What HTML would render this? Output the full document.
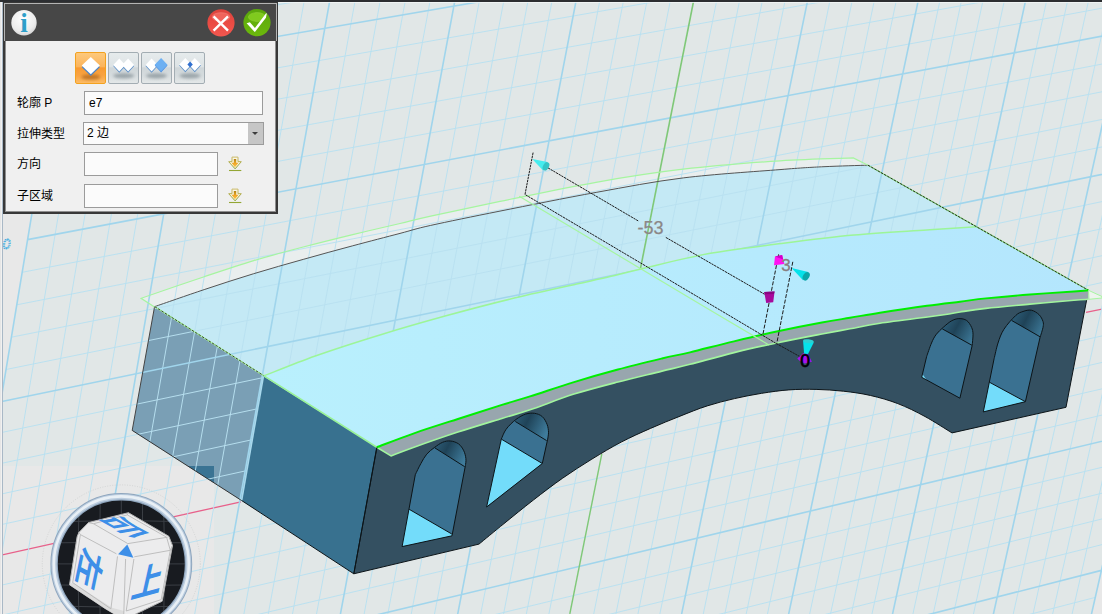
<!DOCTYPE html>
<html><head><meta charset="utf-8"><title>3D</title>
<style>
html,body{margin:0;padding:0;}
body{width:1102px;height:614px;overflow:hidden;position:relative;background:#e1e7e7;font-family:"Liberation Sans","Noto Sans CJK SC",sans-serif;font-size:12px;color:#000;}
#scene{position:absolute;left:0;top:0;display:block;}
#topbar{position:absolute;left:0;top:0;width:1102px;height:2px;background:#2c2e31;}
#topline{position:absolute;left:0;top:2px;width:1102px;height:1px;background:#f4f7f7;opacity:.8}
#leftbar{position:absolute;left:0;top:2px;width:3px;height:612px;background:linear-gradient(90deg,#e3e3e3 0,#e9e9e9 1px,#f2f2f2 1px,#f0f0f0 2px,#a9b8c6 2px,#a9b8c6 3px);}
#panel{position:absolute;left:3px;top:2px;width:275px;height:212px;background:#383838;}
#panel .in{position:absolute;left:1px;top:1px;width:273px;height:38px;background:#b4b4b4;}
#panel .hd{position:absolute;left:2px;top:2px;width:271px;height:37px;background:#474747;}
#panel .bf{position:absolute;left:2px;top:39px;width:271px;height:171px;background:#8e8e8e;}
#panel .bd{position:absolute;left:3px;top:39px;width:269px;height:170px;background:#f0f0f0;}
.lbl{position:absolute;left:17px;font-size:12px;line-height:14px;white-space:nowrap;}
.inp{position:absolute;box-sizing:border-box;border:1px solid #9b9b9b;background:#fbfbfb;font-size:12px;}
.btn{position:absolute;top:52px;width:31px;height:32px;box-sizing:border-box;border:1px solid #a3adb3;border-radius:2px;background:linear-gradient(#e6ebec,#dde3e5 45%,#cfd6d9 50%,#d6dcde 75%,#e3e7e8);}
.btn.on{border-color:#f3a21f;background:linear-gradient(#fdc97c,#fbb45c 45%,#f89a32 50%,#f9a443 75%,#fdbc66);}
.btn svg{position:absolute;left:0;top:0}
</style></head><body>
<svg id="scene" width="1102" height="614" viewBox="0 0 1102 614">
<defs>
<linearGradient id="topg" x1="0" y1="0" x2="1" y2="0"><stop offset="0" stop-color="#b9f0fd"/><stop offset="1" stop-color="#b4e6fd"/></linearGradient>
<linearGradient id="ceil1" x1="0" y1="0" x2="1" y2="0.5"><stop offset="0" stop-color="#3a7595"/><stop offset="0.55" stop-color="#1f4358"/><stop offset="1" stop-color="#3f7c9c"/></linearGradient>
<radialGradient id="ring" cx="0.5" cy="0.5" r="0.5"><stop offset="0.9" stop-color="#8fa6bf"/><stop offset="0.93" stop-color="#dfe9f2"/><stop offset="0.97" stop-color="#c5d4e3"/><stop offset="1" stop-color="#8fa3b8"/></radialGradient>
</defs>
<rect width="1102" height="614" fill="#e8e8e8"/>
<polygon points="-151.3,1317.7 1010.9,967.7 1329.3,-429.5 111.2,-264.2" fill="#e1e7e7"/>
<rect x="0" y="466" width="214" height="148" fill="#e8e8e8"/>
<text x="2.6" y="249" font-family="'Liberation Sans',sans-serif" font-style="italic" font-size="14" fill="none" stroke="#3cabe0" stroke-width="0.9" stroke-dasharray="1.6 0.8">0</text>
<path d="M141.1,298.3C151.6,294.7 185.4,283.0 204.2,276.7C223.0,270.4 237.2,265.6 253.7,260.6C270.2,255.7 286.7,251.3 303.2,247.0C319.7,242.7 336.6,238.5 352.7,234.6C368.8,230.7 387.0,226.6 400.0,223.5C413.0,220.4 414.0,219.9 430.7,216.2C447.4,212.5 472.4,207.1 500.0,201.4C527.5,195.8 565.5,187.7 596.0,182.3C626.5,176.9 652.3,172.8 683.0,169.2C713.7,165.6 751.6,162.7 780.0,160.8C808.4,158.9 841.1,158.4 853.3,157.9L868,165.2L868.0,165.2C860.7,165.4 838.7,166.0 824.0,166.7C809.3,167.4 803.5,167.7 780.0,169.6C756.5,171.5 713.9,174.1 683.3,177.9C652.6,181.7 626.6,186.9 596.1,192.4C565.6,197.9 527.6,205.6 500.0,211.1C472.4,216.6 447.4,221.7 430.7,225.4C414.0,229.1 413.0,230.0 400.0,233.4C387.0,236.8 368.8,241.5 352.7,245.8C336.6,250.1 319.7,254.7 303.2,259.4C286.7,264.0 270.2,268.7 253.7,273.7C237.2,278.7 220.7,284.1 204.2,289.6C187.7,295.1 162.9,303.8 154.7,306.6Z" fill="#e9eeee"/>
<path d="M154.7,306.6C162.9,303.8 187.7,295.1 204.2,289.6C220.7,284.1 237.2,278.7 253.7,273.7C270.2,268.7 286.7,264.0 303.2,259.4C319.7,254.7 336.6,250.1 352.7,245.8C368.8,241.5 387.0,236.8 400.0,233.4C413.0,230.0 414.0,229.1 430.7,225.4C447.4,221.7 472.4,216.6 500.0,211.1C527.6,205.6 565.6,197.9 596.1,192.4C626.6,186.9 652.6,181.7 683.3,177.9C713.9,174.1 756.5,171.5 780.0,169.6C803.5,167.7 809.3,167.4 824.0,166.7C838.7,166.0 860.7,165.4 868.0,165.2L976.5,226.8L976.5,226.8C968.2,227.3 947.1,228.6 926.7,230.0C906.3,231.4 878.3,232.8 854.1,235.1C829.9,237.3 805.7,240.4 781.5,243.5C757.3,246.6 732.5,249.3 708.9,253.6C685.3,257.9 656.4,265.4 639.9,269.2C623.4,273.0 620.5,274.1 610.0,276.6C599.5,279.1 593.2,280.4 576.7,284.1C560.2,287.8 533.1,293.5 511.3,298.8C489.5,304.1 467.8,309.8 446.0,315.8C424.2,321.8 402.5,328.0 380.7,334.7C358.9,341.4 334.7,349.1 315.3,356.0C295.9,362.9 272.7,372.5 264.2,375.8Z" fill="#c4e9f5"/>
<polygon points="154.5,307 264.5,376.8 242.6,501.2 132.2,430.4" fill="#7a9fb5"/>
<clipPath id="lfc"><polygon points="154.5,307 264.5,376.8 242.6,501.2 132.2,430.4"/></clipPath>
<rect x="187" y="466" width="27" height="17" fill="#3a7393" clip-path="url(#lfc)"/>
<path d="M0,555.3L241,501.8" stroke="#e8608a" stroke-width="1.3" fill="none"/>
<path d="M1086,312.4L1102,309.2" stroke="#e8608a" stroke-width="1.3" fill="none"/>
<path d="M-124.8,1309.7L139.2,-268.0M-98.5,1301.8L167.1,-271.8M-72.4,1293.9L194.8,-275.5M-46.3,1286.1L222.4,-279.3M5.3,1270.5L276.9,-286.7M30.9,1262.8L304.0,-290.4M56.3,1255.2L330.8,-294.0M81.6,1247.5L357.5,-297.6M131.8,1232.4L410.5,-304.8M156.7,1224.9L436.7,-308.4M181.5,1217.5L462.8,-311.9M206.1,1210.1L488.7,-315.4M254.9,1195.4L540.1,-322.4M279.2,1188.1L565.6,-325.8M303.3,1180.8L590.9,-329.3M327.2,1173.6L616.0,-332.7M374.8,1159.3L665.9,-339.5M398.3,1152.2L690.7,-342.8M421.8,1145.1L715.3,-346.2M445.1,1138.1L739.7,-349.5M491.4,1124.2L788.2,-356.0M514.4,1117.2L812.2,-359.3M537.2,1110.4L836.1,-362.5M559.9,1103.5L859.9,-365.8M605.0,1089.9L907.0,-372.2M627.4,1083.2L930.3,-375.3M649.6,1076.5L953.5,-378.5M671.7,1069.8L976.6,-381.6M715.7,1056.6L1022.4,-387.8M737.4,1050.1L1045.1,-390.9M759.1,1043.5L1067.7,-394.0M780.7,1037.0L1090.2,-397.0M823.5,1024.1L1134.7,-403.1M844.7,1017.7L1156.8,-406.1M865.9,1011.4L1178.8,-409.0M886.9,1005.0L1200.6,-412.0M928.6,992.5L1244.0,-417.9M949.4,986.2L1265.5,-420.8M970.0,980.0L1286.9,-423.7M990.5,973.9L1308.1,-426.6M-146.5,1288.6L1016.8,941.8M-141.7,1259.5L1022.7,915.7M-136.8,1230.2L1028.7,889.6M-131.9,1200.9L1034.6,863.5M-122.1,1141.9L1046.6,810.9M-117.2,1112.2L1052.6,784.5M-112.3,1082.5L1058.7,758.0M-107.3,1052.6L1064.7,731.4M-97.4,992.6L1076.9,678.0M-92.4,962.5L1083.0,651.2M-87.4,932.2L1089.1,624.4M-82.3,901.9L1095.3,597.4M-72.2,840.8L1107.6,543.2M-67.1,810.2L1113.8,516.0M-62.0,779.4L1120.0,488.8M-56.9,748.5L1126.3,461.4M-46.6,686.4L1138.8,406.4M-41.4,655.2L1145.1,378.8M-36.2,623.9L1151.4,351.1M-31.0,592.5L1157.7,323.3M-20.5,529.4L1170.4,267.5M-15.2,497.6L1176.8,239.5M-9.9,465.8L1183.2,211.4M-4.6,433.8L1189.7,183.2M6.0,369.5L1202.6,126.5M11.4,337.2L1209.1,98.1M16.8,304.8L1215.6,69.5M22.2,272.3L1222.1,40.9M33.0,206.9L1235.2,-16.6M38.5,174.0L1241.8,-45.5M43.9,141.0L1248.4,-74.5M49.4,107.9L1255.0,-103.6M60.5,41.3L1268.3,-162.0M66.0,7.9L1275.0,-191.4M71.6,-25.7L1281.7,-220.8M77.2,-59.4L1288.5,-250.3M88.5,-127.2L1302.0,-309.7M94.1,-161.3L1308.8,-339.5M99.8,-195.4L1315.6,-369.4M105.5,-229.8L1322.4,-399.4" stroke="#b8e0f0" stroke-width="0.95" fill="none"/>
<path d="M-151.3,1317.7L111.2,-264.2M-20.4,1278.3L249.7,-283.0M106.8,1240.0L384.1,-301.2M230.6,1202.7L514.5,-318.9M351.1,1166.4L641.1,-336.1M582.5,1096.7L883.5,-369.0M693.8,1063.2L999.6,-384.7M802.2,1030.6L1112.5,-400.1M907.8,998.7L1222.4,-415.0M1010.9,967.7L1329.3,-429.5M-151.3,1317.7L1010.9,967.7M-127.0,1171.4L1040.6,837.2M-102.4,1022.7L1070.8,704.8M-77.3,871.4L1101.4,570.4M-51.7,717.5L1132.5,433.9M0.7,401.7L1196.1,154.9M27.6,239.6L1228.6,12.2M55.0,74.7L1261.7,-132.8M82.8,-93.2L1295.2,-280.0M111.2,-264.2L1329.3,-429.5" stroke="#a0d5ec" stroke-width="1.6" fill="none"/>
<path d="M693.8,0L640.3,269.4" stroke="#7fc878" stroke-width="1.6" fill="none"/>
<path d="M601.8,453.8L569.8,614" stroke="#7fc878" stroke-width="1.4" fill="none"/>
<path d="M154.7,306.6C162.9,303.8 187.7,295.1 204.2,289.6C220.7,284.1 237.2,278.7 253.7,273.7C270.2,268.7 286.7,264.0 303.2,259.4C319.7,254.7 336.6,250.1 352.7,245.8C368.8,241.5 387.0,236.8 400.0,233.4C413.0,230.0 414.0,229.1 430.7,225.4C447.4,221.7 472.4,216.6 500.0,211.1C527.6,205.6 565.6,197.9 596.1,192.4C626.6,186.9 652.6,181.7 683.3,177.9C713.9,174.1 756.5,171.5 780.0,169.6C803.5,167.7 809.3,167.4 824.0,166.7C838.7,166.0 860.7,165.4 868.0,165.2" stroke="#555" stroke-width="1" fill="none"/>
<path d="M154.5,307L141.1,298.3C151.6,294.7 185.4,283.0 204.2,276.7C223.0,270.4 237.2,265.6 253.7,260.6C270.2,255.7 286.7,251.3 303.2,247.0C319.7,242.7 336.6,238.5 352.7,234.6C368.8,230.7 387.0,226.6 400.0,223.5C413.0,220.4 414.0,219.9 430.7,216.2C447.4,212.5 472.4,207.1 500.0,201.4C527.5,195.8 565.5,187.7 596.0,182.3C626.5,176.9 652.3,172.8 683.0,169.2C713.7,165.6 751.6,162.7 780.0,160.8C808.4,158.9 841.1,158.4 853.3,157.9L868,165.2" stroke="#a6f5a0" stroke-width="1.2" fill="none"/>
<path d="M132.2,430.4L154.5,307" stroke="#444" stroke-width="1" fill="none"/>
<path d="M132.2,430.4L242,500.8" stroke="#333" stroke-width="1" fill="none"/>
<polygon points="263.4,376.3 378,448 353.8,573.8 241.6,500.5" fill="#38718f"/>
<path d="M263.4,376.3L241.6,500.5" stroke="#a8d8ec" stroke-width="1.6" fill="none"/>
<path d="M376.8,447.2C383.0,444.9 400.5,438.0 414.0,433.3C427.5,428.6 443.2,423.7 457.9,419.0C472.5,414.3 489.9,408.7 501.9,404.9C513.9,401.1 518.0,400.2 530.0,396.4C542.0,392.6 559.4,386.6 574.0,382.1C588.6,377.6 603.2,373.4 617.9,369.5C632.5,365.6 649.9,361.4 661.9,358.5C673.9,355.6 678.0,355.2 690.0,352.3C702.0,349.4 719.4,344.8 734.0,341.3C748.6,337.8 763.2,334.3 777.9,331.2C792.5,328.1 809.9,324.7 821.9,322.5C833.9,320.3 840.3,319.4 850.0,317.8C859.7,316.2 867.2,314.7 880.0,312.7C892.8,310.7 913.7,307.6 927.0,305.8C940.3,304.0 950.2,302.9 960.0,301.7C969.8,300.5 974.4,299.6 986.0,298.4C997.6,297.2 1015.3,295.6 1029.9,294.5C1044.6,293.4 1064.1,292.2 1073.9,291.5C1083.7,290.8 1086.1,290.5 1088.5,290.3L1066,407.3L952,432.9L952.0,432.9C947.5,430.2 934.0,421.4 925.0,416.5C916.0,411.6 906.9,407.1 897.8,403.6C888.7,400.1 879.7,397.6 870.6,395.5C861.5,393.4 852.5,392.2 843.4,391.2C834.3,390.2 825.2,389.6 816.1,389.4C807.0,389.2 798.0,389.2 788.9,389.9C779.8,390.5 770.8,391.9 761.7,393.3C752.6,394.8 743.6,396.5 734.5,398.6C725.4,400.7 716.3,403.0 707.2,405.9C698.1,408.8 689.5,412.4 680.0,416.2C670.5,419.9 660.3,424.1 650.5,428.4C640.7,432.7 631.0,437.0 621.2,442.1C611.4,447.2 601.7,453.1 591.9,459.1C582.1,465.1 572.4,471.4 562.6,478.2C552.8,485.0 543.1,492.5 533.3,500.1C523.5,507.7 513.0,516.3 504.0,523.6C494.9,530.9 483.2,540.7 479.0,544.1L353.8,573.8Z" fill="#345061" stroke="#0c1418" stroke-width="1"/>
<path d="M264.2,375.8C272.7,372.5 295.9,362.9 315.3,356.0C334.7,349.1 358.9,341.4 380.7,334.7C402.5,328.0 424.2,321.8 446.0,315.8C467.8,309.8 489.5,304.1 511.3,298.8C533.1,293.5 560.2,287.8 576.7,284.1C593.2,280.4 599.5,279.1 610.0,276.6C620.5,274.1 623.4,273.0 639.9,269.2C656.4,265.4 685.3,257.9 708.9,253.6C732.5,249.3 757.3,246.6 781.5,243.5C805.7,240.4 829.9,237.3 854.1,235.1C878.3,232.8 906.3,231.4 926.7,230.0C947.1,228.6 968.2,227.3 976.5,226.8L1088.5,290.3L1088.5,290.3C1086.1,290.5 1083.7,290.8 1073.9,291.5C1064.1,292.2 1044.6,293.4 1029.9,294.5C1015.3,295.6 997.6,297.2 986.0,298.4C974.4,299.6 969.8,300.5 960.0,301.7C950.2,302.9 940.3,304.0 927.0,305.8C913.7,307.6 892.8,310.7 880.0,312.7C867.2,314.7 859.7,316.2 850.0,317.8C840.3,319.4 833.9,320.3 821.9,322.5C809.9,324.7 792.5,328.1 777.9,331.2C763.2,334.3 748.6,337.8 734.0,341.3C719.4,344.8 702.0,349.4 690.0,352.3C678.0,355.2 673.9,355.6 661.9,358.5C649.9,361.4 632.5,365.6 617.9,369.5C603.2,373.4 588.6,377.6 574.0,382.1C559.4,386.6 542.0,392.6 530.0,396.4C518.0,400.2 513.9,401.1 501.9,404.9C489.9,408.7 472.5,414.3 457.9,419.0C443.2,423.7 427.5,428.6 414.0,433.3C400.5,438.0 383.0,444.9 376.8,447.2Z" fill="url(#topg)"/>
<path d="M264.2,375.8C272.7,372.5 295.9,362.9 315.3,356.0C334.7,349.1 358.9,341.4 380.7,334.7C402.5,328.0 424.2,321.8 446.0,315.8C467.8,309.8 489.5,304.1 511.3,298.8C533.1,293.5 560.2,287.8 576.7,284.1C593.2,280.4 599.5,279.1 610.0,276.6C620.5,274.1 623.4,273.0 639.9,269.2C656.4,265.4 685.3,257.9 708.9,253.6C732.5,249.3 757.3,246.6 781.5,243.5C805.7,240.4 829.9,237.3 854.1,235.1C878.3,232.8 906.3,231.4 926.7,230.0C947.1,228.6 968.2,227.3 976.5,226.8" stroke="#9cf598" stroke-width="1.5" fill="none"/>
<path d="M154.7,306.6L263.6,375.6" stroke="#a6f5a0" stroke-width="1.3" fill="none"/>
<path d="M154.7,306.6L263.6,375.6" stroke="#3c4a30" stroke-width="1" fill="none" stroke-dasharray="2.5 1.5"/>
<path d="M263.6,375.6L376.8,447.2" stroke="#98f296" stroke-width="1.6" fill="none"/>
<path d="M868,165.2L1088.5,290.3" stroke="#8fe08a" stroke-width="1.3" fill="none"/>
<path d="M868,165.2L1088.5,290.3" stroke="#24331a" stroke-width="1" fill="none" stroke-dasharray="2.5 1.2"/>
<path d="M376.8,447.2C383.0,444.9 400.5,438.0 414.0,433.3C427.5,428.6 443.2,423.7 457.9,419.0C472.5,414.3 489.9,408.7 501.9,404.9C513.9,401.1 518.0,400.2 530.0,396.4C542.0,392.6 559.4,386.6 574.0,382.1C588.6,377.6 603.2,373.4 617.9,369.5C632.5,365.6 649.9,361.4 661.9,358.5C673.9,355.6 678.0,355.2 690.0,352.3C702.0,349.4 719.4,344.8 734.0,341.3C748.6,337.8 763.2,334.3 777.9,331.2C792.5,328.1 809.9,324.7 821.9,322.5C833.9,320.3 840.3,319.4 850.0,317.8C859.7,316.2 867.2,314.7 880.0,312.7C892.8,310.7 913.7,307.6 927.0,305.8C940.3,304.0 950.2,302.9 960.0,301.7C969.8,300.5 974.4,299.6 986.0,298.4C997.6,297.2 1015.3,295.6 1029.9,294.5C1044.6,293.4 1064.1,292.2 1073.9,291.5C1083.7,290.8 1086.1,290.5 1088.5,290.3L1088.5,299.3L1088.5,299.3C1086.1,299.5 1083.7,299.5 1073.9,300.3C1064.1,301.1 1044.6,302.8 1029.9,304.1C1015.3,305.5 997.6,307.1 986.0,308.4C974.4,309.7 967.3,310.9 960.0,312.0C952.7,313.1 955.3,313.1 942.0,315.0C928.7,316.9 895.3,321.0 880.0,323.3C864.7,325.6 859.7,327.0 850.0,328.8C840.3,330.6 833.9,331.7 821.9,334.0C809.9,336.3 792.5,339.6 777.9,342.7C763.2,345.8 748.6,349.0 734.0,352.6C719.4,356.2 702.0,361.2 690.0,364.3C678.0,367.4 673.9,368.2 661.9,371.1C649.9,374.1 632.5,378.2 617.9,382.0C603.2,385.8 588.6,389.5 574.0,394.1C559.4,398.7 542.0,405.8 530.0,409.8C518.0,413.9 513.9,414.7 501.9,418.4C489.9,422.1 472.5,427.3 457.9,432.1C443.2,436.9 425.1,443.3 414.0,447.3C402.9,451.3 394.8,454.5 391.0,455.9Z" fill="#98a6ae"/>
<path d="M376.8,447.2L391.0,455.9C394.8,454.5 402.9,451.3 414.0,447.3C425.1,443.3 443.2,436.9 457.9,432.1C472.5,427.3 489.9,422.1 501.9,418.4C513.9,414.7 518.0,413.9 530.0,409.8C542.0,405.8 559.4,398.7 574.0,394.1C588.6,389.5 603.2,385.8 617.9,382.0C632.5,378.2 649.9,374.1 661.9,371.1C673.9,368.2 678.0,367.4 690.0,364.3C702.0,361.2 719.4,356.2 734.0,352.6C748.6,349.0 763.2,345.8 777.9,342.7C792.5,339.6 809.9,336.3 821.9,334.0C833.9,331.7 840.3,330.6 850.0,328.8C859.7,327.0 864.7,325.6 880.0,323.3C895.3,321.0 928.7,316.9 942.0,315.0C955.3,313.1 952.7,313.1 960.0,312.0C967.3,310.9 974.4,309.7 986.0,308.4C997.6,307.1 1015.3,305.5 1029.9,304.1C1044.6,302.8 1064.1,301.1 1073.9,300.3C1083.7,299.5 1086.1,299.5 1088.5,299.3" stroke="#a2f59e" stroke-width="1.6" fill="none" stroke-linejoin="round"/>
<path d="M376.8,447.2C383.0,444.9 400.5,438.0 414.0,433.3C427.5,428.6 443.2,423.7 457.9,419.0C472.5,414.3 489.9,408.7 501.9,404.9C513.9,401.1 518.0,400.2 530.0,396.4C542.0,392.6 559.4,386.6 574.0,382.1C588.6,377.6 603.2,373.4 617.9,369.5C632.5,365.6 649.9,361.4 661.9,358.5C673.9,355.6 678.0,355.2 690.0,352.3C702.0,349.4 719.4,344.8 734.0,341.3C748.6,337.8 763.2,334.3 777.9,331.2C792.5,328.1 809.9,324.7 821.9,322.5C833.9,320.3 840.3,319.4 850.0,317.8C859.7,316.2 867.2,314.7 880.0,312.7C892.8,310.7 913.7,307.6 927.0,305.8C940.3,304.0 950.2,302.9 960.0,301.7C969.8,300.5 974.4,299.6 986.0,298.4C997.6,297.2 1015.3,295.6 1029.9,294.5C1044.6,293.4 1064.1,292.2 1073.9,291.5C1083.7,290.8 1086.1,290.5 1088.5,290.3" stroke="#00ee00" stroke-width="1.9" fill="none"/>
<path d="M1088.5,290.3L1102,296.5L1102,298L1089,299.3Z" fill="#eef4ee" stroke="#a6f5a0" stroke-width="1"/>
<clipPath id="wc0"><path d="M402.1,546.6L415.3,474.7C416.2,472.8 419.1,466.7 421.0,463.3C422.9,459.9 424.4,456.9 426.7,454.2C429.0,451.5 432.0,449.3 434.7,447.3C437.4,445.3 440.0,443.4 442.6,442.3C445.2,441.2 447.9,440.7 450.6,441.0C453.3,441.3 456.4,442.3 458.6,443.9C460.8,445.5 462.6,448.3 463.8,450.8C465.0,453.3 465.6,456.2 465.9,458.7C466.2,461.2 465.5,464.5 465.4,465.6L452.0,535.8Z"/></clipPath>
<path d="M402.1,546.6L415.3,474.7C416.2,472.8 419.1,466.7 421.0,463.3C422.9,459.9 424.4,456.9 426.7,454.2C429.0,451.5 432.0,449.3 434.7,447.3C437.4,445.3 440.0,443.4 442.6,442.3C445.2,441.2 447.9,440.7 450.6,441.0C453.3,441.3 456.4,442.3 458.6,443.9C460.8,445.5 462.6,448.3 463.8,450.8C465.0,453.3 465.6,456.2 465.9,458.7C466.2,461.2 465.5,464.5 465.4,465.6L452.0,535.8Z" fill="#3a7191"/>
<clipPath id="wc1"><path d="M486.6,507.0L501.3,439.1C502.1,437.5 503.7,432.6 506.1,429.3C508.5,426.0 512.6,422.0 515.9,419.5C519.2,417.0 522.6,415.1 525.7,414.1C528.8,413.1 531.7,412.9 534.5,413.3C537.3,413.7 540.2,414.8 542.3,416.6C544.4,418.5 546.1,421.8 547.1,424.4C548.1,427.0 548.4,429.8 548.5,432.2C548.6,434.6 547.8,438.0 547.7,439.1L542.3,463.5Z"/></clipPath>
<path d="M486.6,507.0L501.3,439.1C502.1,437.5 503.7,432.6 506.1,429.3C508.5,426.0 512.6,422.0 515.9,419.5C519.2,417.0 522.6,415.1 525.7,414.1C528.8,413.1 531.7,412.9 534.5,413.3C537.3,413.7 540.2,414.8 542.3,416.6C544.4,418.5 546.1,421.8 547.1,424.4C548.1,427.0 548.4,429.8 548.5,432.2C548.6,434.6 547.8,438.0 547.7,439.1L542.3,463.5Z" fill="#3a7191"/>
<clipPath id="wc2"><path d="M921.7,377.3L926.6,356.7C927.4,354.4 929.9,346.8 931.5,343.0C933.1,339.2 934.4,336.8 936.4,334.2C938.4,331.6 940.8,329.6 943.2,327.4C945.7,325.2 948.5,322.6 951.1,321.1C953.7,319.6 956.3,318.7 958.9,318.6C961.5,318.5 964.6,319.0 966.7,320.5C968.8,322.0 970.6,325.1 971.6,327.4C972.6,329.7 972.9,331.2 973.0,334.2C973.1,337.2 972.3,343.5 972.2,345.4L959.9,398.2Z"/></clipPath>
<path d="M921.7,377.3L926.6,356.7C927.4,354.4 929.9,346.8 931.5,343.0C933.1,339.2 934.4,336.8 936.4,334.2C938.4,331.6 940.8,329.6 943.2,327.4C945.7,325.2 948.5,322.6 951.1,321.1C953.7,319.6 956.3,318.7 958.9,318.6C961.5,318.5 964.6,319.0 966.7,320.5C968.8,322.0 970.6,325.1 971.6,327.4C972.6,329.7 972.9,331.2 973.0,334.2C973.1,337.2 972.3,343.5 972.2,345.4L959.9,398.2Z" fill="#3a7191"/>
<clipPath id="wc3"><path d="M983.3,411.9L994.1,358.7C994.8,356.1 996.4,347.9 998.0,343.0C999.6,338.1 1001.0,333.9 1003.9,329.3C1006.8,324.7 1012.4,318.6 1015.6,315.6C1018.8,312.6 1020.4,312.4 1023.0,311.5C1025.6,310.6 1028.6,309.7 1031.3,310.2C1034.0,310.7 1037.1,312.8 1039.1,314.7C1041.0,316.6 1042.3,319.4 1043.0,321.5C1043.7,323.6 1043.5,324.8 1043.0,327.4C1042.5,330.0 1040.6,335.6 1040.1,337.2L1025.4,401.7Z"/></clipPath>
<path d="M983.3,411.9L994.1,358.7C994.8,356.1 996.4,347.9 998.0,343.0C999.6,338.1 1001.0,333.9 1003.9,329.3C1006.8,324.7 1012.4,318.6 1015.6,315.6C1018.8,312.6 1020.4,312.4 1023.0,311.5C1025.6,310.6 1028.6,309.7 1031.3,310.2C1034.0,310.7 1037.1,312.8 1039.1,314.7C1041.0,316.6 1042.3,319.4 1043.0,321.5C1043.7,323.6 1043.5,324.8 1043.0,327.4C1042.5,330.0 1040.6,335.6 1040.1,337.2L1025.4,401.7Z" fill="#3a7191"/>

<g clip-path="url(#wc0)"><polygon points="428,430 470,430 470,469.7 434.7,447.8" fill="url(#ceil1)"/><path d="M434.7,447.8L464.7,466.7" stroke="#0c1418" stroke-width="1"/><polygon points="409.2,509.3 450.6,533.2 453,536 402,547.2 395,547" fill="#73dcfa"/><path d="M409.2,509.3L451.8,534" stroke="#0c1418" stroke-width="1"/></g>
<g clip-path="url(#wc1)"><polygon points="508,400 552,400 552,443.5 515.3,421.5" fill="url(#ceil1)"/><path d="M515.3,421.5L546.6,440.6" stroke="#0c1418" stroke-width="1"/><polygon points="494,435 501.3,439.1 542.3,463.5 486.6,507 480,507" fill="#73dcfa"/><path d="M501.3,439.1L542.3,463.5" stroke="#0c1418" stroke-width="1"/></g>
<g clip-path="url(#wc2)"><polygon points="936,310 980,310 980,349.5 972.2,345.4 942.3,328.9" fill="url(#ceil1)"/><path d="M942.3,328.9L972.2,345.4" stroke="#0c1418" stroke-width="1"/><polygon points="915,376 921.7,377.3 927,380.5 921,372" fill="#73dcfa"/></g>
<g clip-path="url(#wc3)"><polygon points="1006,300 1050,300 1050,342 1040.1,336.8 1011.7,320.5" fill="url(#ceil1)"/><path d="M1011.7,320.5L1040.1,336.8" stroke="#0c1418" stroke-width="1"/><polygon points="989.2,382.1 1025.4,401.7 983.3,411.9 978,411" fill="#73dcfa"/><path d="M989.2,382.1L1025.4,401.7" stroke="#0c1418" stroke-width="1"/></g>

<path d="M402.1,546.6L415.3,474.7C416.2,472.8 419.1,466.7 421.0,463.3C422.9,459.9 424.4,456.9 426.7,454.2C429.0,451.5 432.0,449.3 434.7,447.3C437.4,445.3 440.0,443.4 442.6,442.3C445.2,441.2 447.9,440.7 450.6,441.0C453.3,441.3 456.4,442.3 458.6,443.9C460.8,445.5 462.6,448.3 463.8,450.8C465.0,453.3 465.6,456.2 465.9,458.7C466.2,461.2 465.5,464.5 465.4,465.6L452.0,535.8Z" fill="none" stroke="#0c1418" stroke-width="1"/>
<path d="M486.6,507.0L501.3,439.1C502.1,437.5 503.7,432.6 506.1,429.3C508.5,426.0 512.6,422.0 515.9,419.5C519.2,417.0 522.6,415.1 525.7,414.1C528.8,413.1 531.7,412.9 534.5,413.3C537.3,413.7 540.2,414.8 542.3,416.6C544.4,418.5 546.1,421.8 547.1,424.4C548.1,427.0 548.4,429.8 548.5,432.2C548.6,434.6 547.8,438.0 547.7,439.1L542.3,463.5Z" fill="none" stroke="#0c1418" stroke-width="1"/>
<path d="M921.7,377.3L926.6,356.7C927.4,354.4 929.9,346.8 931.5,343.0C933.1,339.2 934.4,336.8 936.4,334.2C938.4,331.6 940.8,329.6 943.2,327.4C945.7,325.2 948.5,322.6 951.1,321.1C953.7,319.6 956.3,318.7 958.9,318.6C961.5,318.5 964.6,319.0 966.7,320.5C968.8,322.0 970.6,325.1 971.6,327.4C972.6,329.7 972.9,331.2 973.0,334.2C973.1,337.2 972.3,343.5 972.2,345.4L959.9,398.2Z" fill="none" stroke="#0c1418" stroke-width="1"/>
<path d="M983.3,411.9L994.1,358.7C994.8,356.1 996.4,347.9 998.0,343.0C999.6,338.1 1001.0,333.9 1003.9,329.3C1006.8,324.7 1012.4,318.6 1015.6,315.6C1018.8,312.6 1020.4,312.4 1023.0,311.5C1025.6,310.6 1028.6,309.7 1031.3,310.2C1034.0,310.7 1037.1,312.8 1039.1,314.7C1041.0,316.6 1042.3,319.4 1043.0,321.5C1043.7,323.6 1043.5,324.8 1043.0,327.4C1042.5,330.0 1040.6,335.6 1040.1,337.2L1025.4,401.7Z" fill="none" stroke="#0c1418" stroke-width="1"/>
<path d="M376.9,447.6L353.8,573.8" stroke="#0c1418" stroke-width="1"/>
<path d="M241.6,500.5L353.8,573.8" stroke="#0c1418" stroke-width="1"/>
<g fill="none" stroke="#1c1c1c" stroke-width="1" stroke-dasharray="2.4 0.7">
<path d="M533.1,152.6L525,194.5L716.6,308L776.5,343.6L800.6,357"/>
<path d="M545.3,166.3L638.2,220.9M665.8,237.4L765,294.5"/>
<path d="M778.6,254.4L762.8,335" stroke-dasharray="4 1.5"/>
<path d="M792.8,261.8L776.7,343.6" stroke-dasharray="4 1.5"/>
</g>
<path d="M519.2,196.2L706.5,308L769,345" stroke="#a6f5a0" stroke-width="1.2" fill="none"/>
<polygon points="532.3,158.9 547.6,162.1 543,170.6" fill="#45ecee"/><ellipse cx="546" cy="166.4" rx="2.9" ry="4.5" transform="rotate(28 546 166.4)" fill="#35c4c6"/>
<path d="M533,160L558,164M534,161.5L554,170" stroke="#a2d6eb" stroke-width="0" fill="none"/>
<polygon points="775,256.4 782.1,255.1 784.4,263.9 774,265.2" fill="#ff12f2"/><polygon points="775,256.4 782.1,255.1 783.2,259.5" fill="#cf00c6"/>
<polygon points="764.2,292 774.6,291.6 773.2,302.3 766.2,303" fill="#a60a9c"/><polygon points="764.2,292 774.6,291.6 773.9,294 765,294.3" fill="#8a0582"/>
<polygon points="791.6,268.1 808.2,272 803,280.2" fill="#06e2ea"/><ellipse cx="806.2" cy="276.3" rx="3.1" ry="4.6" transform="rotate(30 806.2 276.3)" fill="#0ba7aa"/>
<polygon points="797.3,358.4 803.1,353.2 808,353.9 811.9,361.7 804.7,363.6 799.5,360.7" fill="#a612ee"/>
<polygon points="803.1,340.9 813.9,342.2 808,354 804.1,353.7" fill="#06e2ea"/><ellipse cx="808.4" cy="341.2" rx="5.4" ry="1.9" transform="rotate(7 808.4 341.2)" fill="#2fd0d2"/>
<g font-family="'Liberation Sans','DejaVu Sans',sans-serif">
<text x="637.6" y="234" font-size="18" fill="#8b8787" stroke="#8b8787" stroke-width="0.25">-53</text>
<text x="781.3" y="270.8" font-size="17" fill="#877f80" stroke="#877f80" stroke-width="0.3">3</text>
<text x="800.2" y="366.8" font-size="17.5" fill="#000" stroke="#000" stroke-width="0.7">0</text>
</g>
<circle cx="121.3" cy="563.9" r="79" fill="none" stroke="#c9cccc" stroke-width="0.7" stroke-dasharray="1 1.5"/>
<circle cx="121.3" cy="563.9" r="67.8" fill="#181b20"/>
<clipPath id="navc"><circle cx="121.3" cy="563.9" r="66.8"/></clipPath>
<path d="M58.3,493.09999999999997Q53.8,563.9 58.3,634.6999999999999M50.5,500.9Q121.3,496.4 192.1,500.9M79.3,493.09999999999997Q76.3,563.9 79.3,634.6999999999999M50.5,521.9Q121.3,518.9 192.1,521.9M100.3,493.09999999999997Q98.8,563.9 100.3,634.6999999999999M50.5,542.9Q121.3,541.4 192.1,542.9M121.3,493.09999999999997Q121.3,563.9 121.3,634.6999999999999M50.5,563.9Q121.3,563.9 192.1,563.9M142.3,493.09999999999997Q143.8,563.9 142.3,634.6999999999999M50.5,584.9Q121.3,586.4 192.1,584.9M163.3,493.09999999999997Q166.3,563.9 163.3,634.6999999999999M50.5,605.9Q121.3,608.9 192.1,605.9M184.3,493.09999999999997Q188.8,563.9 184.3,634.6999999999999M50.5,626.9Q121.3,631.4 192.1,626.9" stroke="#3b3f45" stroke-width="1" fill="none" clip-path="url(#navc)"/>
<circle cx="121.3" cy="563.9" r="67.2" fill="none" stroke="#8fa6be" stroke-width="7.4"/>
<circle cx="121.3" cy="563.9" r="67.3" fill="none" stroke="#bccddf" stroke-width="5.2"/>
<circle cx="121.3" cy="563.9" r="67.5" fill="none" stroke="#e9f0f6" stroke-width="2.6"/>
<polygon points="78.9,532.4 88.5,522.6 128.4,512.7 168.8,536.3 172.5,545.5 162.2,601.2 124.0,619.7 105.5,608.8 69.5,584.8 77.1,536.8" fill="#ececed" stroke="#b4b4b4" stroke-width="1"/>
<polygon points="69.5,584.8 105.5,608.8 124.0,619.7 124.0,611.0 112.0,607.7 72.7,582.6" fill="#dcdcdc"/>
<polyline points="116.4,553.8 80.4,534.6" fill="none" stroke="#b9b9b9" stroke-width="0.9"/>
<polyline points="134.3,556.8 170.3,550.3" fill="none" stroke="#b9b9b9" stroke-width="0.9"/>
<polyline points="125.6,559.0 123.6,619.7" fill="none" stroke="#b9b9b9" stroke-width="0.9"/>
<polyline points="117.5,556.4 110.9,608.8" fill="none" stroke="#b9b9b9" stroke-width="0.9"/>
<polyline points="133.9,559.0 126.2,611.0" fill="none" stroke="#b9b9b9" stroke-width="0.9"/>
<polyline points="88.5,522.6 93.5,523.7 127.3,543.3" fill="none" stroke="#b9b9b9" stroke-width="0.9"/>
<polyline points="127.3,543.7 167.7,537.2" fill="none" stroke="#b9b9b9" stroke-width="0.9"/>
<polyline points="80.4,534.6 78.9,532.4" fill="none" stroke="#b9b9b9" stroke-width="0.9"/>
<polyline points="170.3,550.3 172.5,545.5" fill="none" stroke="#b9b9b9" stroke-width="0.9"/>
<polyline points="93.5,523.7 127.3,514.9 128.4,512.7" fill="none" stroke="#b9b9b9" stroke-width="0.9"/>
<polyline points="127.3,514.9 166.6,537.2 170.3,550.3" fill="none" stroke="#b9b9b9" stroke-width="0.9"/>
<polyline points="80.4,534.6 72.7,582.6 110.9,608.8" fill="none" stroke="#b9b9b9" stroke-width="0.9"/>
<polyline points="126.2,611.0 161.2,599.6 170.3,550.3" fill="none" stroke="#b9b9b9" stroke-width="0.9"/>
<polygon points="127.3,544.4 118.1,554.2 133.4,557.7" fill="#3d8fe8"/>
<text transform="matrix(-0.738,0.132,-0.992,-0.541,125.1,526.9)" font-size="36" text-anchor="middle" y="13.0" fill="#3d8fe8" font-family="'Liberation Sans','Noto Sans CJK SC',sans-serif" font-weight="700">后</text>
<text transform="matrix(-0.218,1.048,-0.709,-0.370,89.4,569.5)" font-size="36" text-anchor="middle" y="13.0" fill="#3d8fe8" font-family="'Liberation Sans','Noto Sans CJK SC',sans-serif" font-weight="700">左</text>
<text transform="matrix(0.840,-0.225,-0.230,1.025,147.8,581.4)" font-size="36" text-anchor="middle" y="13.0" fill="#3d8fe8" font-family="'Liberation Sans','Noto Sans CJK SC',sans-serif" font-weight="700">上</text>
</svg>
<div id="topbar"></div><div id="topline"></div><div id="leftbar"></div>
<div id="panel"><div class="in"></div><div class="hd"></div><div class="bf"></div><div class="bd"></div></div>
<svg style="position:absolute;left:0;top:0" width="290" height="50" viewBox="0 0 290 50">
<defs>
<radialGradient id="ig" cx="0.45" cy="0.35" r="0.7"><stop offset="0" stop-color="#ffffff"/><stop offset="0.7" stop-color="#ececec"/><stop offset="1" stop-color="#cfcfcf"/></radialGradient>
<linearGradient id="rg" x1="0" y1="0" x2="0" y2="1"><stop offset="0" stop-color="#dd443d"/><stop offset="0.5" stop-color="#ea4b43"/><stop offset="1" stop-color="#f2574f"/></linearGradient>
<linearGradient id="gg" x1="0" y1="0" x2="0" y2="1"><stop offset="0" stop-color="#5aa60c"/><stop offset="1" stop-color="#6cb80c"/></linearGradient>
</defs>
<circle cx="24" cy="22.8" r="12.7" fill="url(#ig)"/>
<text x="24" y="32.3" font-family="'Liberation Serif',serif" font-weight="bold" font-size="27" text-anchor="middle" fill="#2e9fc9">i</text>
<circle cx="221" cy="22.8" r="13.6" fill="url(#rg)"/>
<ellipse cx="221" cy="17" rx="8.8" ry="4.3" fill="#f2685f" stroke="#f6938d" stroke-width="0.5" opacity=".9"/>
<path d="M213.6,16.4L228,30.6M228,16.4L213.6,30.6" stroke="#fff" stroke-width="2.4"/>
<circle cx="257" cy="22.6" r="13.6" fill="url(#gg)"/>
<ellipse cx="257" cy="17" rx="8.6" ry="4.4" fill="#86d022" stroke="#a4dc4a" stroke-width="0.5" opacity=".85"/>
<path d="M246.6,23.2L249.9,22.3L254.9,27.9L265.9,13.6L266.9,13.3L265.9,17.8L254.9,32L254.2,31.4Z" fill="#fff"/>
</svg>
<div class="btn on" style="left:75px"></div><div class="btn" style="left:108px"></div><div class="btn" style="left:141px"></div><div class="btn" style="left:174px"></div>
<svg style="position:absolute;left:75px;top:52px" width="131" height="32" viewBox="75 52 131 32"><defs><filter id="bl" x="-30%" y="-150%" width="160%" height="400%"><feGaussianBlur stdDeviation="1.5"/></filter></defs>
<ellipse cx="90.8" cy="77.2" rx="9.5" ry="2.6" fill="#9c5410" opacity=".6" filter="url(#bl)"/>
<polygon points="81.7,67.3 90.8,58.5 99.9,67.3 90.8,76.1" fill="#4f86c6"/>
<polygon points="81.7,65.6 90.8,56.9 99.9,65.6 90.8,74.3" fill="#fff"/>
<ellipse cx="123.7" cy="75.8" rx="10.5" ry="2.6" fill="#5c6a72" opacity=".48" filter="url(#bl)"/>
<polygon points="113.2,66.1 119.3,59.5 123.7,64.3 128.1,59.5 134.2,66.1 128.1,72.7 123.7,67.9 119.3,72.7" fill="#5b8fc8"/>
<polygon points="113.2,65.0 119.3,58.5 123.7,63.2 128.1,58.5 134.2,65.0 128.1,71.5 123.7,66.8 119.3,71.5" fill="#fff"/>
<ellipse cx="156.5" cy="75.8" rx="10.5" ry="2.6" fill="#5c6a72" opacity=".48" filter="url(#bl)"/>
<polygon points="145.5,66.1 151.6,59.5 157.7,66.1 151.6,72.7" fill="#5b8fc8"/>
<polygon points="145.5,65.0 151.6,58.5 157.7,65.0 151.6,71.5" fill="#fff"/>
<polygon points="154.7,65.6 161.1,58.7 167.5,65.6 161.1,72.5" fill="#4f8fe0"/>
<polygon points="154.7,64.8 161.1,58.1 167.5,64.8 161.1,71.5" fill="#6db0f2"/>
<ellipse cx="190" cy="75.8" rx="10.5" ry="2.6" fill="#5c6a72" opacity=".48" filter="url(#bl)"/>
<polygon points="179.2,65.6 185.3,59.0 190.1,64.1 194.8,59.0 200.9,65.6 194.8,72.2 190.1,67.1 185.3,72.2" fill="#5b8fc8"/>
<polygon points="179.2,64.5 185.3,58.0 190.1,63.1 194.8,58.0 200.9,64.5 194.8,71.0 190.1,65.9 185.3,71.0" fill="#fff"/>
<polygon points="187.4,64.5 190.1,61.6 192.8,64.5 190.1,67.4" fill="#2f6fd0"/>
</svg>
<div class="lbl" style="top:96px">轮廓 P</div>
<div class="lbl" style="top:127px">拉伸类型</div>
<div class="lbl" style="top:157px">方向</div>
<div class="lbl" style="top:189px">子区域</div>
<div class="inp" style="left:84px;top:91px;width:179px;height:24px;line-height:22px;padding-left:4px">e7</div>
<div class="inp" style="left:83px;top:122px;width:181px;height:23px;line-height:21px;padding-left:3px">2 边<div style="position:absolute;right:0;top:0;width:15px;height:21px;background:#c6c6c6"></div><div style="position:absolute;right:5px;top:9px;width:0;height:0;border-left:3px solid transparent;border-right:3px solid transparent;border-top:3px solid #3c3c3c"></div></div>
<div class="inp" style="left:84px;top:152px;width:134px;height:24px"></div>
<div class="inp" style="left:84px;top:184px;width:134px;height:24px"></div>
<svg style="position:absolute;left:226px;top:154px" width="20" height="52" viewBox="226 154 20 52">
<defs><linearGradient id="og" x1="0" y1="0" x2="0" y2="1"><stop offset="0" stop-color="#b08212"/><stop offset="0.55" stop-color="#f0a828"/><stop offset="1" stop-color="#ffc548"/></linearGradient>
<linearGradient id="ol" x1="0" y1="0" x2="0" y2="1"><stop offset="0" stop-color="#cbbb6c"/><stop offset="0.4" stop-color="#b4ae50"/><stop offset="1" stop-color="#88a02a"/></linearGradient></defs>
<g><path d="M232,157.1H238V161.7H241.3L235.1,168.8L228.7,161.7H232Z" fill="#faf5e4" stroke="url(#ol)" stroke-width="1"/><path d="M233.8,159H236.2V162.8H238.5L234.95,167.2L231.5,162.8H233.8Z" fill="url(#og)"/><path d="M229,170.5H241.3" stroke="#93a634" stroke-width="1.1"/></g>
<g transform="translate(0,32)"><path d="M232,157.1H238V161.7H241.3L235.1,168.8L228.7,161.7H232Z" fill="#faf5e4" stroke="url(#ol)" stroke-width="1"/><path d="M233.8,159H236.2V162.8H238.5L234.95,167.2L231.5,162.8H233.8Z" fill="url(#og)"/><path d="M229,170.5H241.3" stroke="#93a634" stroke-width="1.1"/></g>
</svg>
</body></html>
